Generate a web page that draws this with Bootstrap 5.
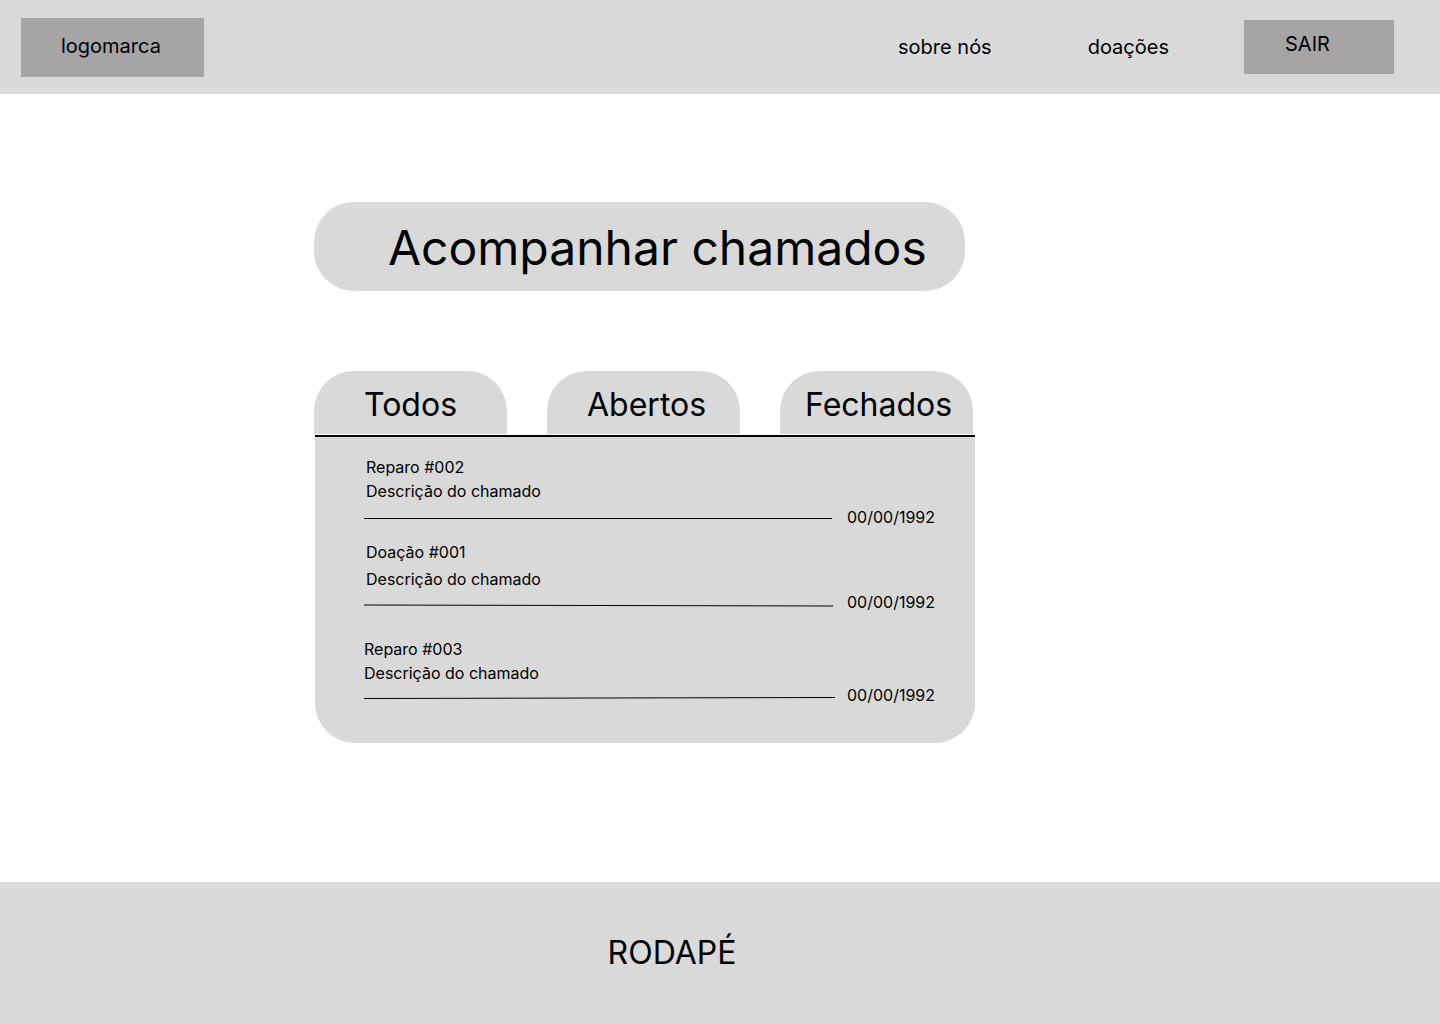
<!DOCTYPE html>
<html lang="pt-BR">
<head>
<meta charset="utf-8">
<meta name="viewport" content="width=device-width, initial-scale=1">
<title>Acompanhar chamados</title>
<link href="https://cdn.jsdelivr.net/npm/bootstrap@5.3.0/dist/css/bootstrap.min.css" rel="stylesheet">
<style>
  body { font-family: Inter, "Liberation Sans", sans-serif; color: #000; background: #fff; }
  a, button { color: inherit; }
  .surface { background: #d9d9d9; }
  .block-dark { background: #a6a4a4; }

  .site-header { padding: 18px 46px 17px 21px; font-size: 20px; line-height: 24px; }
  .site-logo { width: 183px; padding: 16px 0 19px 40px; }
  .site-nav { column-gap: 96px; margin-top: 2px; }
  .logout { width: 150px; padding: 12px 0 18px 41px; margin-left: -21px; }

  .page-main { padding: 108px 151px 139px 0; }
  .tickets { max-width: 661px; }
  .page-title { max-width: 651px; padding: 17px 0 14px 74px; border-radius: 40px; font-size: 48px; line-height: 58px; font-weight: 400; }

  .ticket-tabs { gap: 40px; margin-top: 80px; }
  .ticket-tab { width: 193px; height: 63px; border-radius: 40px 40px 0 0; font-size: 32px; line-height: 40px; padding-top: 4px; padding-bottom: 0; }
  .tab-all { padding-left: 50px; }
  .tab-open { padding-left: 40px; }
  .tab-closed { padding-left: 25px; }

  .ticket-panel { margin: 1px 0 0 1px; padding: 20px 39px 38px 49px; border-top: 2px solid #000; border-radius: 0 0 40px 40px; font-size: 16px; line-height: 20px; }
  .ticket-text { row-gap: 4px; padding-left: 2px; margin-bottom: 2px; }
  .ticket-first .ticket-text { margin-bottom: 6px; }
  .ticket-second { margin-top: 15px; }
  .ticket-second .ticket-text { row-gap: 7px; margin-bottom: 3px; }
  .ticket-third { margin-top: 27px; }
  .ticket-third .ticket-text { padding-left: 0; }
  .ticket-foot { gap: 12px; }
  .ticket-rule { height: 20px; min-width: 0; width: 0; stroke: #000; }
  .ticket-date { width: 89px; }

  .site-footer { padding: 51px 96px 51px 0; font-size: 32px; line-height: 40px; }

  @media (max-width: 991px) {
    .page-main { padding-left: 16px; padding-right: 16px; }
    .site-nav { column-gap: 32px; }
    .logout { margin-left: 0; }
    .site-footer { padding-right: 0; }
  }
</style>
</head>
<body class="d-flex flex-column min-vh-100">

<header class="site-header surface d-flex flex-wrap justify-content-between align-items-start">
  <a class="site-logo block-dark text-decoration-none" href="#">logomarca</a>
  <nav class="site-nav d-flex flex-wrap align-items-center" aria-label="Principal">
    <a class="text-decoration-none" href="#sobre">sobre nós</a>
    <a class="text-decoration-none" href="#doacoes">doações</a>
    <button type="button" class="logout block-dark border-0 text-start">SAIR</button>
  </nav>
</header>

<main class="page-main flex-grow-1">
  <div class="tickets mx-auto">
    <h1 class="page-title surface mb-0">Acompanhar chamados</h1>

    <div class="ticket-tabs d-flex" role="tablist" aria-label="Chamados">
      <button type="button" role="tab" aria-selected="true" class="ticket-tab tab-all surface border-0 text-start">Todos</button>
      <button type="button" role="tab" aria-selected="false" class="ticket-tab tab-open surface border-0 text-start">Abertos</button>
      <button type="button" role="tab" aria-selected="false" class="ticket-tab tab-closed surface border-0 text-start">Fechados</button>
    </div>

    <section class="ticket-panel surface">
      <ul class="list-unstyled mb-0">
        <li class="ticket-first">
          <div class="ticket-text d-flex flex-column">
            <span>Reparo #002</span>
            <span>Descrição do chamado</span>
          </div>
          <div class="ticket-foot d-flex">
            <svg class="ticket-rule flex-grow-1" aria-hidden="true"><line x1="0" y1="11.5" x2="99.4%" y2="11.5"/></svg>
            <time class="ticket-date text-nowrap">00/00/1992</time>
          </div>
        </li>
        <li class="ticket-second">
          <div class="ticket-text d-flex flex-column">
            <span>Doação #001</span>
            <span>Descrição do chamado</span>
          </div>
          <div class="ticket-foot d-flex">
            <svg class="ticket-rule flex-grow-1" aria-hidden="true"><line x1="0" y1="13" x2="99.6%" y2="14"/></svg>
            <time class="ticket-date text-nowrap">00/00/1992</time>
          </div>
        </li>
        <li class="ticket-third">
          <div class="ticket-text d-flex flex-column">
            <span>Reparo #003</span>
            <span>Descrição do chamado</span>
          </div>
          <div class="ticket-foot d-flex">
            <svg class="ticket-rule flex-grow-1" aria-hidden="true"><line x1="0" y1="13.5" x2="100%" y2="12.5"/></svg>
            <time class="ticket-date text-nowrap">00/00/1992</time>
          </div>
        </li>
      </ul>
    </section>
  </div>
</main>

<footer class="site-footer surface text-center">RODAPÉ</footer>

<script src="https://cdn.jsdelivr.net/npm/bootstrap@5.3.0/dist/js/bootstrap.bundle.min.js"></script>
</body>
</html>
